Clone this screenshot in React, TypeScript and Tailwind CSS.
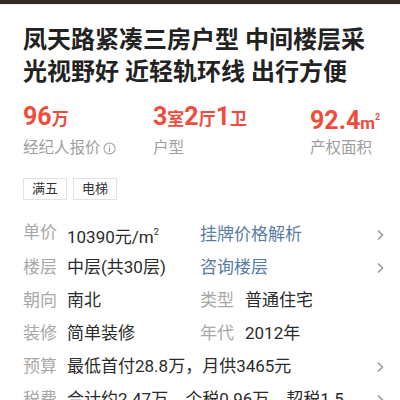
import React from "react";

const FONT = { fontFamily: "Roboto, 'Noto Sans CJK SC', sans-serif" };

function Chevron() {
  return (
    <svg width="8" height="12" viewBox="0 0 8 12" className="shrink-0">
      <path d="M2 1.5 L6.5 6 L2 10.5" fill="none" stroke="#9a9a9a" strokeWidth="1.6" />
    </svg>
  );
}

function Row({
  label,
  value,
  label2,
  value2,
  link,
  chevron,
}: {
  label: string;
  value: React.ReactNode;
  label2?: string;
  value2?: string;
  link?: string;
  chevron?: boolean;
}) {
  const wide = !label2 && !link;
  return (
    <div className="flex items-center h-[33px] text-[17px] leading-[33px]">
      <div className={wide ? "flex flex-1 min-w-0" : "flex w-[177px] shrink-0"}>
        <span className="w-[44px] shrink-0 text-[#a8a8a8]">{label}</span>
        <span className="text-[#2b2b2b] whitespace-nowrap overflow-hidden text-ellipsis">{value}</span>
      </div>
      {!wide && (
        <div className="flex flex-1">
          {link ? (
            <span className="text-[#587ca4]">{link}</span>
          ) : (
            <>
              <span className="w-[45px] shrink-0 text-[#a8a8a8]">{label2}</span>
              <span className="text-[#2b2b2b]">{value2}</span>
            </>
          )}
        </div>
      )}
      <div className="w-[20px] flex justify-center shrink-0 ml-[8px]">{chevron && <Chevron />}</div>
    </div>
  );
}

export default function App() {
  return (
    <div className="w-[400px] h-[400px] overflow-hidden bg-white" style={FONT}>
      <div className="h-[4px] bg-[#2f2a24]" />
      <div className="h-[1px] bg-[#ececec]" />
      <div className="pl-[23px] pr-[10px]">
        <h1 className="pt-[19px] w-[355px] text-[24px] leading-[32px] font-bold text-[#222]">
          凤天路紧凑三房户型 中间楼层采光视野好 近轻轨环线 出行方便
        </h1>

        <div className="flex mt-[14px]">
          <div className="w-[130px]">
            <div className="h-[30px] leading-[30px] text-[#f04c3c] font-bold">
              <span className="text-[25px]">96</span>
              <span className="text-[17px]">万</span>
            </div>
            <div className="mt-[5px] h-[22px] leading-[22px] text-[15.5px] text-[#9e9e9e] flex items-center">
              经纪人报价
              <svg width="13" height="13" viewBox="0 0 14 14" className="ml-[2px]">
                <circle cx="7" cy="7" r="6" fill="none" stroke="#9e9e9e" strokeWidth="1.1" />
                <rect x="6.4" y="3.2" width="1.2" height="1.2" fill="#9e9e9e" />
                <rect x="6.4" y="5.6" width="1.2" height="5" fill="#9e9e9e" />
              </svg>
            </div>
          </div>
          <div className="w-[157px]">
            <div className="h-[30px] leading-[30px] text-[#f04c3c] font-bold">
              <span className="text-[25px]">3</span>
              <span className="text-[17px]">室</span>
              <span className="text-[25px]">2</span>
              <span className="text-[17px]">厅</span>
              <span className="text-[25px]">1</span>
              <span className="text-[17px]">卫</span>
            </div>
            <div className="mt-[5px] h-[22px] leading-[22px] text-[15.5px] text-[#9e9e9e]">户型</div>
          </div>
          <div>
            <div className="h-[30px] leading-[30px] text-[#f04c3c] font-bold">
              <span className="text-[25px]">92.4</span>
              <span className="text-[17px]">m</span>
              <span className="text-[9px] align-[9px]">2</span>
            </div>
            <div className="mt-[5px] h-[22px] leading-[22px] text-[15.5px] text-[#9e9e9e]">产权面积</div>
          </div>
        </div>

        <div className="flex gap-[6px] mt-[19px]">
          <span className="h-[22px] px-[8px] leading-[20px] border border-[#e2e2e2] text-[13px] text-[#333]">满五</span>
          <span className="h-[22px] px-[8px] leading-[20px] border border-[#e2e2e2] text-[13px] text-[#333]">电梯</span>
        </div>

        <div className="mt-[18px]">
          <Row
            label="单价"
            value={
              <>
                10390元/m<span className="text-[9px] align-[8px]">2</span>
              </>
            }
            link="挂牌价格解析"
            chevron
          />
          <Row label="楼层" value="中层(共30层)" link="咨询楼层" chevron />
          <Row label="朝向" value="南北" label2="类型" value2="普通住宅" />
          <Row label="装修" value="简单装修" label2="年代" value2="2012年" />
          <Row label="预算" value="最低首付28.8万，月供3465元" chevron />
          <Row label="税费" value="合计约2.47万，个税0.96万，契税1.51万" chevron />
        </div>
      </div>
    </div>
  );
}
